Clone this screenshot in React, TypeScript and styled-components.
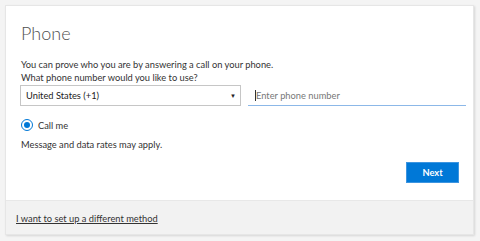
import React from 'react';
import styled, { createGlobalStyle } from 'styled-components';

const Global = createGlobalStyle`
  html, body {
    margin: 0;
    padding: 0;
    background: #f4f4f4;
    font-family: Lato, "Open Sans", sans-serif;
    color: #333;
  }
`

const Page = styled.div`
  width: 480px;
  height: 241px;
  padding: 5px 6px 0 5px;
  box-sizing: border-box;
`

const Card = styled.div`
  background: #fff;
  border: 1px solid #e6e6e6;
  box-shadow: 1px 1px 2px rgba(0, 0, 0, 0.12);
  height: 228px;
  display: flex;
  flex-direction: column;
`

const Body = styled.div`
  flex: 1;
  padding: 16px 7px 0 14px;
  display: flex;
  flex-direction: column;
`

const Title = styled.h1`
  margin: 0 0 0 1px;
  font-weight: 300;
  font-size: 18px;
  line-height: 22px;
  color: #505050;
`

const Text = styled.p<{ top?: number }>`
  margin: ${p => p.top || 0}px 0 0 1px;
  font-size: 9.3px;
  line-height: 12.5px;
  color: #333;
`

const Row = styled.div`
  display: flex;
  gap: 7px;
  margin-top: 1px;
`

const Select = styled.div`
  width: 221px;
  height: 21px;
  box-sizing: border-box;
  border: 1px solid #c6c6c6;
  display: flex;
  align-items: center;
  justify-content: space-between;
  padding: 0 4px 0 5px;
  font-size: 9.3px;
  color: #222;
`

const Caret = styled.span`
  font-size: 6px;
  color: #222;
`

const Input = styled.div`
  width: 218px;
  height: 21px;
  box-sizing: border-box;
  border-bottom: 1.5px solid #8cb8e8;
  display: flex;
  align-items: center;
  padding-left: 8px;
  font-size: 9.3px;
  color: #777;
  position: relative;
  &::before {
    content: '';
    position: absolute;
    left: 7px;
    top: 5px;
    width: 1px;
    height: 11px;
    background: #333;
  }
`

const Radio = styled.label`
  display: flex;
  align-items: center;
  gap: 5px;
  margin-top: 13px;
  font-size: 9.3px;
  color: #333;
  margin-left: 1px;
`

const Dot = styled.span`
  width: 12px;
  height: 12px;
  box-sizing: border-box;
  border: 1.5px solid #0078d7;
  border-radius: 50%;
  display: flex;
  align-items: center;
  justify-content: center;
  &::after {
    content: '';
    width: 6px;
    height: 6px;
    border-radius: 50%;
    background: #0078d7;
  }
`

const Actions = styled.div`
  display: flex;
  justify-content: flex-end;
  margin-top: 10px;
  padding-right: 7px;
`

const Button = styled.button`
  width: 53px;
  height: 21px;
  background: #0078d7;
  border: 1px solid #3d95e0;
  color: #fff;
  font-family: Lato, "Open Sans", sans-serif;
  font-weight: 700;
  font-size: 9.3px;
  padding: 0;
`

const Footer = styled.div`
  background: #f2f2f2;
  border-top: 1px solid #e8e8e8;
  height: 33px;
  display: flex;
  align-items: center;
  padding-left: 10px;
`

const Link = styled.a`
  font-size: 9.3px;
  color: #333;
  text-decoration: underline;
  margin-top: 1px;
`

function App() {
  return (
    <Page>
      <Global />
      <Card>
        <Body>
          <Title>Phone</Title>
          <Text top={15}>You can prove who you are by answering a call on your phone.</Text>
          <Text>What phone number would you like to use?</Text>
          <Row>
            <Select>
              United States (+1)
              <Caret>▼</Caret>
            </Select>
            <Input>Enter phone number</Input>
          </Row>
          <Radio>
            <Dot />
            Call me
          </Radio>
          <Text top={8}>Message and data rates may apply.</Text>
          <Actions>
            <Button>Next</Button>
          </Actions>
        </Body>
        <Footer>
          <Link>I want to set up a different method</Link>
        </Footer>
      </Card>
    </Page>
  )
}

export default App
